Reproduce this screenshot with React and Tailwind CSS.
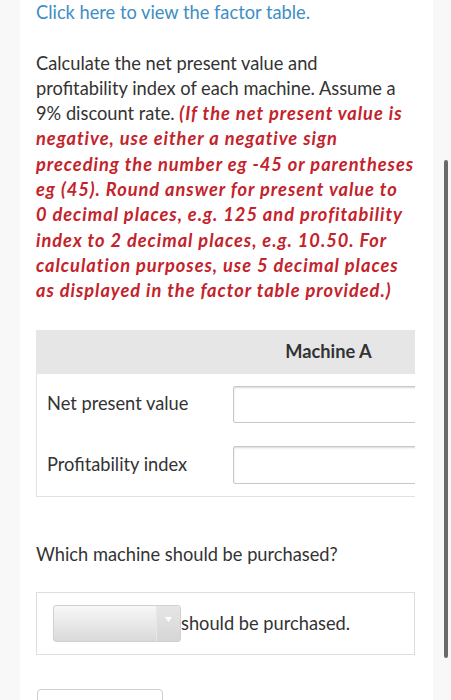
import React from "react";

export default function App() {
  return (
    <div className="relative h-[700px] overflow-hidden bg-[#f8f8f8] font-['Lato','Noto_Sans',sans-serif]">
      <div className="ml-[20px] w-[413px] h-[700px] bg-white pl-[16px] pr-[18px] text-[18.25px] leading-[25.3px] text-[#333333]">
        <p className="text-[#3d8ec5]">Click here to view the factor table.</p>
        <p className="mt-[25.3px] whitespace-nowrap">
          Calculate the net present value and
          <br />
          profitability index of each machine. Assume a
          <br />
          9% discount rate.{" "}
          <span className="font-bold italic text-[#c4232b] tracking-[0.95px]">
            (If the net present value is
            <br />
            negative, use either a negative sign
            <br />
            preceding the number eg -45 or parentheses
            <br />
            eg (45). Round answer for present value to
            <br />
            0 decimal places, e.g. 125 and profitability
            <br />
            index to 2 decimal places, e.g. 10.50. For
            <br />
            calculation purposes, use 5 decimal places
            <br />
            as displayed in the factor table provided.)
          </span>
        </p>

        <div className="mt-[26px] w-[379px] overflow-hidden">
          <div className="w-[390px]">
            <div className="grid grid-cols-[197px_193px] h-[44px] bg-[#e6e6e6] items-center">
              <div />
              <div className="text-center font-bold pr-[2px]">Machine A</div>
            </div>
            <div className="border-l border-b border-[#e2e2e2]">
              <div className="grid grid-cols-[196px_193px] h-[61px] items-center">
                <div className="pl-[10px]">Net present value</div>
                <div className="h-[37px] border border-[#c9c9c9] rounded-[2px] shadow-[inset_0_1px_2px_rgba(0,0,0,0.15)] bg-white" />
              </div>
              <div className="grid grid-cols-[196px_193px] h-[61px] items-center">
                <div className="pl-[10px]">Profitability index</div>
                <div className="h-[38px] border border-[#c9c9c9] rounded-[2px] shadow-[inset_0_1px_2px_rgba(0,0,0,0.15)] bg-white" />
              </div>
            </div>
          </div>
        </div>

        <p className="mt-[45px]">Which machine should be purchased?</p>

        <div className="mt-[25px] w-[379px] h-[63px] border border-[#dedede] flex items-center pl-[16px]">
          <div className="flex h-[37px] w-[128px] rounded-[3px] border border-[#d0d0d0] bg-gradient-to-b from-[#f7f7f7] to-[#dadada] overflow-hidden">
            <div className="flex-1" />
            <div className="w-[24px] border-l border-[#e8e8e8] bg-gradient-to-b from-[#e6e6e6] to-[#d6d6d6] flex items-start justify-center pt-[11px]">
              <svg width="7" height="5" viewBox="0 0 7 5">
                <path d="M0 0 L7 0 L3.5 5 Z" fill="#ffffff" />
              </svg>
            </div>
          </div>
          <span>should be purchased.</span>
        </div>

        <div className="mt-[34px] ml-[1px] w-[126px] h-[40px] border border-[#cfcfcf] rounded-t-[4px]" />
      </div>

      <div className="absolute left-[444px] top-[160px] w-[4px] h-[498px] rounded-[2px] bg-[#6a6a6a]" />
    </div>
  );
}
